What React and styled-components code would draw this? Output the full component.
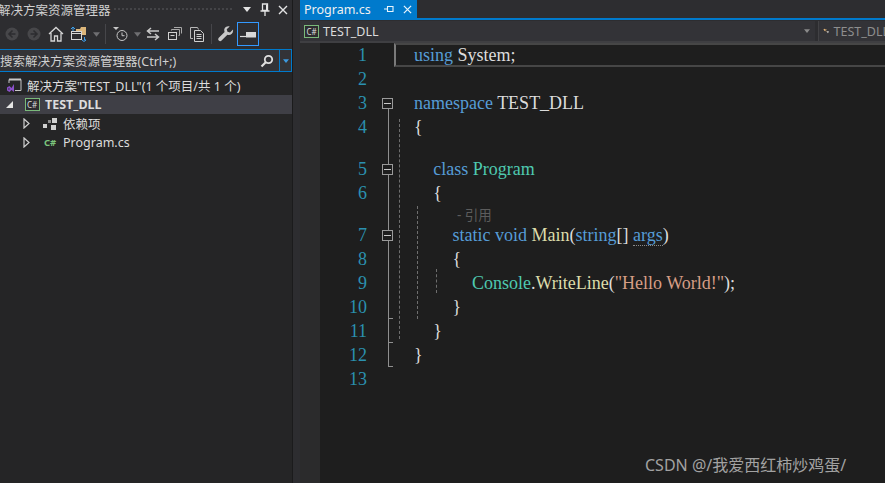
import React from "react";
import styled, { createGlobalStyle } from "styled-components";

const GlobalStyle = createGlobalStyle`
  html, body {
    margin: 0;
    padding: 0;
    width: 885px;
    height: 483px;
    overflow: hidden;
    background: #2d2d30;
  }
`;

const uiFont = `"Noto Sans", "Noto Sans CJK SC", sans-serif`;

const Window = styled.div`
  position: relative;
  width: 885px;
  height: 483px;
  display: flex;
  overflow: hidden;
  background: #2d2d30;
  font-family: ${uiFont};
`;

/* ---- solution explorer ---- */
const Explorer = styled.div`
  width: 292px;
  height: 100%;
  flex: none;
  display: flex;
  flex-direction: column;
  background: #252526;
  border-right: 1px solid #1b1b1c;
`;

const TitleBar = styled.div`
  height: 19px;
  display: flex;
  align-items: center;
  background: #2d2d30;
  color: #d0d0d0;
  font-size: 12.5px;
  white-space: nowrap;
`;

const TitleText = styled.span`
  margin-left: -2px;
  width: 111px;
  flex: none;
`;

const Grip = styled.div`
  flex: none;
  width: 119px;
  margin-left: 4px;
  height: 5px;
  background-image: radial-gradient(#46464a 0.7px, transparent 0.8px);
  background-size: 4px 4px;
`;

const TitleButtons = styled.div`
  display: flex;
  align-items: center;
  margin-left: 7px;
  gap: 3px;
`;

const TitleButton = styled.div`
  width: 15px;
  height: 15px;
  display: flex;
  align-items: center;
  justify-content: center;
`;

const Toolbar = styled.div`
  height: 30px;
  display: flex;
  align-items: center;
  background: #2d2d30;
  padding-left: 1px;
`;

const ToolButton = styled.div`
  width: ${(p) => p.$w || 22}px;
  height: 24px;
  flex: none;
  display: flex;
  align-items: center;
  justify-content: center;
  box-sizing: border-box;
  border: ${(p) => (p.$active ? "1px solid #3399ff" : "none")};
`;

const ToolSep = styled.div`
  width: 1px;
  height: 20px;
  flex: none;
  margin: 0 ${(p) => p.$gap || 5}px;
  background: #46464a;
`;

const SearchBox = styled.div`
  height: 23px;
  display: flex;
  align-items: center;
  box-sizing: border-box;
  border: 1px solid #007acc;
  border-left: none;
  background: #333337;
  color: #d0d0d0;
  font-size: 12.5px;
  white-space: nowrap;
`;

const SearchText = styled.span`
  flex: 1;
`;

const SearchIcon = styled.div`
  width: 24px;
  display: flex;
  justify-content: center;
`;

const SearchDrop = styled.div`
  width: 11px;
  height: 100%;
  display: flex;
  align-items: center;
  justify-content: center;
  border-left: 1px solid #007acc;
`;

const Tree = styled.div`
  margin-top: 3px;
  display: flex;
  flex-direction: column;
`;

const TreeRow = styled.div`
  height: ${(p) => p.$h || 19}px;
  display: flex;
  align-items: center;
  padding-left: ${(p) => p.$pad || 0}px;
  background: ${(p) => (p.$selected ? "#3f3f46" : "transparent")};
  color: #dcdcdc;
  font-size: 12.5px;
  font-weight: ${(p) => (p.$selected ? 700 : 400)};
  white-space: nowrap;
`;

const TreeIcon = styled.div`
  width: ${(p) => p.$w || 16}px;
  flex: none;
  display: flex;
  align-items: center;
  justify-content: center;
  margin-right: ${(p) => p.$mr || 0}px;
`;

const ProjectBadge = styled.div`
  width: 13px;
  height: 11px;
  border: 1px solid #7ab97a;
  color: #dcdcdc;
  background: #2d2d30;
  font-size: 8px;
  font-weight: 400;
  line-height: 11px;
  text-align: center;
`;

const CsBadge = styled.span`
  color: #7cc47c;
  font-size: 9.5px;
  font-weight: 700;
`;

/* ---- editor ---- */
const Editor = styled.div`
  margin-left: 7px;
  flex: 1;
  min-width: 0;
  display: flex;
  flex-direction: column;
`;

const TabStrip = styled.div`
  height: 18px;
  flex: none;
  display: flex;
  border-bottom: 2px solid #007acc;
`;

const Tab = styled.div`
  width: 117px;
  display: flex;
  align-items: center;
  background: #007acc;
  color: #f0f0f0;
  font-size: 12.5px;
  padding-left: 4px;
  box-sizing: border-box;
`;

const TabName = styled.span`
  width: 76px;
  flex: none;
`;

const TabIcon = styled.div`
  width: 18px;
  flex: none;
  display: flex;
  justify-content: center;
`;

const NavBar = styled.div`
  height: 20px;
  flex: none;
  display: flex;
  background: #333337;
  border-bottom: 2px solid #3f3f42;
  border-top: 1px solid #2d2d30;
  box-sizing: content-box;
  margin-top: 0;
`;

const NavCombo = styled.div`
  width: ${(p) => p.$w}px;
  flex: none;
  display: flex;
  align-items: center;
  padding-left: 4px;
  box-sizing: border-box;
  border-right: ${(p) => (p.$split ? "1px solid #424245" : "none")};
  color: ${(p) => p.$color || "#dcdcdc"};
  font-size: 12.5px;
  white-space: nowrap;
`;

const NavGap = styled.div`
  width: 3px;
  flex: none;
  background: #2d2d30;
  border-right: 1px solid #424245;
`;

const NavName = styled.span`
  margin-left: 4px;
  flex: 1;
`;

const NavArrow = styled.div`
  width: 16px;
  flex: none;
  display: flex;
  justify-content: center;
`;

const CodeBody = styled.div`
  position: relative;
  flex: 1;
  display: flex;
  background: #1e1e1e;
  min-height: 0;
`;

const Margin = styled.div`
  width: 20px;
  flex: none;
  background: #2b2b2c;
`;

const Lines = styled.div`
  flex: 1;
  min-width: 0;
  display: flex;
  flex-direction: column;
`;

const Line = styled.div`
  height: 24px;
  display: flex;
  font-family: "Liberation Serif", "Noto Sans CJK SC", serif;
  font-size: 18px;
  line-height: 24px;
  white-space: pre;
  color: #dcdcdc;
`;

const LineNo = styled.div`
  width: 47px;
  flex: none;
  text-align: right;
  color: #2b91af;
`;

const Code = styled.div`
  margin-left: 47px;
  padding-left: ${(p) => p.$level * 19.3}px;
`;

const LensRow = styled.div`
  height: 18px;
  padding-left: 137px;
  display: flex;
  align-items: center;
  color: #5c5c5c;
  font-size: 13.5px;
  white-space: pre;
`;

const Kw = styled.span`
  color: ${(p) =>
    ({ k: "#569cd6", t: "#4ec9b0", m: "#dcdcaa", s: "#d69d85" })[p.$kind] || "#dcdcdc"};
  border-bottom: ${(p) => (p.$dotted ? "1px dotted #8a8a8a" : "none")};
`;

const CurrentLine = styled.div`
  position: absolute;
  left: 94px;
  right: 0;
  top: 0;
  height: 24px;
  box-sizing: border-box;
  border: 2px solid #464646;
  border-left: 2px solid #7a7a7a;
  border-right: none;
`;

const FoldLine = styled.div`
  position: absolute;
  left: 88px;
  top: ${(p) => p.$top}px;
  height: ${(p) => p.$h}px;
  width: 1px;
  background: #8f8f8f;
`;

const FoldTick = styled.div`
  position: absolute;
  left: 88px;
  top: ${(p) => p.$top}px;
  width: 5px;
  height: 1px;
  background: #8f8f8f;
`;

const FoldBox = styled.div`
  position: absolute;
  left: 82px;
  top: ${(p) => p.$top}px;
  width: 11px;
  height: 11px;
  box-sizing: border-box;
  border: 1px solid #9a9a9a;
  background: #1e1e1e;
  &::after {
    content: "";
    position: absolute;
    left: 1px;
    right: 1px;
    top: 4px;
    height: 1px;
    background: #c8c8c8;
  }
`;

const IndentGuide = styled.div`
  position: absolute;
  left: ${(p) => p.$left}px;
  top: ${(p) => p.$top}px;
  height: ${(p) => p.$h}px;
  width: 0;
  border-left: 1px dashed #6e6e6e;
`;

const Watermark = styled.div`
  position: absolute;
  left: 645px;
  top: 454px;
  color: #a2a2a2;
  font-size: 16px;
  line-height: 22px;
  white-space: nowrap;
  font-family: "Noto Sans", "Noto Sans CJK SC", sans-serif;
`;

const Triangle = ({ color = "#d0d0d0", size = 7 }) => (
  <svg width={size} height={Math.ceil(size / 2) + 1} viewBox="0 0 8 5">
    <path d="M0 0h8L4 5z" fill={color} />
  </svg>
);

const Expander = () => (
  <svg width="7" height="11" viewBox="0 0 7 11">
    <path d="M1 1l5 4.5L1 10z" fill="none" stroke="#d0d0d0" strokeWidth="1.2" />
  </svg>
);

const CircleArrow = ({ flip }) => (
  <svg width="14" height="14" viewBox="0 0 14 14" style={flip ? { transform: "scaleX(-1)" } : undefined}>
    <circle cx="7" cy="7" r="6.5" fill="#47474a" />
    <path d="M7.5 3.5L4 7l3.5 3.5M4 7h6.5" stroke="#2d2d30" strokeWidth="1.6" fill="none" />
  </svg>
);

const HomeIcon = () => (
  <svg width="16" height="16" viewBox="0 0 16 16">
    <path d="M1 8l7-6.5L15 8M3 7v8h3.5v-5h3v5H13V7" fill="none" stroke="#d6d6d6" strokeWidth="1.3" />
  </svg>
);

const SyncViewIcon = () => (
  <svg width="18" height="16" viewBox="0 0 18 16">
    <path d="M6 3h4l1-2h5v8h-4V5H6z" fill="#dcb67a" />
    <rect x="1.5" y="5.5" width="10" height="8" fill="#2d2d30" stroke="#d6d6d6" />
    <path d="M1.5 7.5h10" stroke="#d6d6d6" />
    <path d="M1 3l2-2 2 2M3 1v4" stroke="#3f9fe8" fill="none" />
    <path d="M12 14l2 1.5 2-1.5h-1.5v-3" stroke="#3f9fe8" fill="none" />
  </svg>
);

const HistoryIcon = () => (
  <svg width="16" height="16" viewBox="0 0 16 16">
    <path d="M0 1h6L3 4z" fill="#c8c8c8" />
    <circle cx="9" cy="9.5" r="5" fill="none" stroke="#c8c8c8" />
    <path d="M9 6.5v3.2h2.5" fill="none" stroke="#c8c8c8" />
  </svg>
);

const SwapIcon = () => (
  <svg width="14" height="14" viewBox="0 0 14 14">
    <path d="M5 1L1.5 4 5 7M2 4h11M9 7l3.5 3L9 13M12 10H1" fill="none" stroke="#c8c8c8" strokeWidth="1.5" />
  </svg>
);

const CollapseIcon = () => (
  <svg width="14" height="14" viewBox="0 0 14 14">
    <rect x="0.5" y="5.5" width="8" height="7" fill="none" stroke="#d0d0d0" />
    <path d="M2.5 8.5h4" stroke="#d0d0d0" />
    <path d="M3.5 3.5V2.5h8v6h-1M6 0.5h7.5v6" fill="none" stroke="#a8a8a8" />
  </svg>
);

const CopyIcon = () => (
  <svg width="16" height="16" viewBox="0 0 16 16">
    <path d="M4 12.5H1.5V1.5h7l1 2" fill="none" stroke="#b8b8b8" />
    <path d="M5.5 4.5h6l3 3v8h-9z" fill="none" stroke="#d0d0d0" />
    <path d="M7.5 8.5h5M7.5 10.5h5M7.5 12.5h5" stroke="#d0d0d0" />
  </svg>
);

const WrenchIcon = () => (
  <svg width="16" height="16" viewBox="0 0 16 16">
    <path d="M15 3.5l-3 3-2.5-.8-.8-2.5 3-2.700C9.500-.2 6.800 1 6.300 3.300c-.2 1 0 1.900.3 2.700L.8 11.800c-.8.8-.8 2 0 2.800s2 .8 2.800 0l5.800-5.800c2.900 1.100 6.300-1.200 5.600-5.300z" fill="#c8c8c8" />
  </svg>
);

const PinnedIcon = () => (
  <svg width="16" height="8" viewBox="0 0 16 8">
    <path d="M0 6.500h6" stroke="#d8d8d8" strokeWidth="1.200" />
    <rect x="6" y="2" width="10" height="5.500" fill="#d8d8d8" />
  </svg>
);

const PinIcon = () => (
  <svg width="10" height="13" viewBox="0 0 10 13">
    <path d="M2.500 1h5v6.500h-5zM0.500 8h9M5 8v5" fill="none" stroke="#e4e4e4" strokeWidth="1.300" />
    <path d="M6 1.500h1.500v6H6z" fill="#e4e4e4" />
  </svg>
);

const CloseIcon = ({ color = "#e4e4e4", size = 10 }) => (
  <svg width={size} height={size} viewBox="0 0 10 10">
    <path d="M1 1l8 8M9 1l-8 8" stroke={color} strokeWidth="1.400" />
  </svg>
);

const TabPinIcon = () => (
  <svg width="10" height="8" viewBox="0 0 10 8">
    <path d="M0 4h3M3.500 1v6M3.500 1.500h5.500v5H3.500" fill="none" stroke="#e8f4fc" strokeWidth="1.100" />
  </svg>
);

const MagnifierIcon = () => (
  <svg width="14" height="14" viewBox="0 0 14 14">
    <circle cx="8.500" cy="5.500" r="3.700" fill="none" stroke="#e0e0e0" strokeWidth="1.800" />
    <path d="M6 8l-4.500 4.500" stroke="#e0e0e0" strokeWidth="2.200" />
  </svg>
);

const SolutionIcon = () => (
  <svg width="16" height="16" viewBox="0 0 16 16">
    <path d="M3 6V2.500h12v11H9" fill="none" stroke="#c8c8c8" />
    <path d="M3 2.500h12" stroke="#c8c8c8" strokeWidth="2" />
    <path d="M8 7v8L5.500 13 3.500 15 1 13.500v-3L3.500 9l2 2z" fill="#8a50c8" />
    <path d="M2.500 11l1.500 1-1.500 1z" fill="#252526" />
  </svg>
);

const DependencyIcon = () => (
  <svg width="14" height="12" viewBox="0 0 14 12">
    <rect x="0" y="6" width="4" height="4" fill="#d0d0d0" />
    <rect x="5" y="2" width="3" height="3" fill="#8e8e8e" />
    <rect x="9" y="0" width="5" height="5" fill="#d0d0d0" />
    <rect x="8" y="7" width="5" height="5" fill="#d0d0d0" />
  </svg>
);

const MemberIcon = () => (
  <svg width="18" height="14" viewBox="0 0 18 14">
    <path d="M1 2l3-1 2 2 3-1 1 2-4 1 1 3-3-1-1-3z" fill="#e8b878" />
    <path d="M7 5l3 3 1 2" stroke="#e8b878" strokeWidth="1.500" fill="none" />
    <path d="M11 8h5v2l-2.500 3L11 10z" fill="#c8c8c8" />
  </svg>
);

const ToolDrop = () => (
  <ToolButton $w={10}>
    <Triangle color="#6f6f72" size={7} />
  </ToolButton>
);

const App = () => {
  return (
    <Window>
      <GlobalStyle />
      <Explorer>
        <TitleBar>
          <TitleText>解决方案资源管理器</TitleText>
          <Grip />
          <TitleButtons>
            <TitleButton>
              <Triangle color="#e4e4e4" size={8} />
            </TitleButton>
            <TitleButton>
              <PinIcon />
            </TitleButton>
            <TitleButton>
              <CloseIcon />
            </TitleButton>
          </TitleButtons>
        </TitleBar>
        <Toolbar>
          <ToolButton>
            <CircleArrow />
          </ToolButton>
          <ToolButton>
            <CircleArrow flip />
          </ToolButton>
          <ToolButton>
            <HomeIcon />
          </ToolButton>
          <ToolButton $w={24}>
            <SyncViewIcon />
          </ToolButton>
          <ToolDrop />
          <ToolSep $gap={4} />
          <ToolButton $w={22}>
            <HistoryIcon />
          </ToolButton>
          <ToolDrop />
          <ToolButton>
            <SwapIcon />
          </ToolButton>
          <ToolButton>
            <CollapseIcon />
          </ToolButton>
          <ToolButton>
            <CopyIcon />
          </ToolButton>
          <ToolSep $gap={3} />
          <ToolButton $w={22}>
            <WrenchIcon />
          </ToolButton>
          <ToolButton $w={22} $active>
            <PinnedIcon />
          </ToolButton>
        </Toolbar>
        <SearchBox>
          <SearchText>搜索解决方案资源管理器(Ctrl+;)</SearchText>
          <SearchIcon>
            <MagnifierIcon />
          </SearchIcon>
          <SearchDrop>
            <Triangle color="#3c9ae0" size={6} />
          </SearchDrop>
        </SearchBox>
        <Tree>
          <TreeRow $h={20} $pad={6}>
            <TreeIcon $mr={5}>
              <SolutionIcon />
            </TreeIcon>
            解决方案"TEST_DLL"(1 个项目/共 1 个)
          </TreeRow>
          <TreeRow $selected $pad={4}>
            <TreeIcon $w={10} $mr={10}>
              <svg width="7" height="7" viewBox="0 0 7 7">
                <path d="M7 0v7H0z" fill="#e4e4e4" />
              </svg>
            </TreeIcon>
            <TreeIcon $mr={5}>
              <ProjectBadge>C#</ProjectBadge>
            </TreeIcon>
            TEST_DLL
          </TreeRow>
          <TreeRow $pad={21}>
            <TreeIcon $w={10} $mr={11}>
              <Expander />
            </TreeIcon>
            <TreeIcon $mr={5}>
              <DependencyIcon />
            </TreeIcon>
            依赖项
          </TreeRow>
          <TreeRow $pad={21}>
            <TreeIcon $w={10} $mr={11}>
              <Expander />
            </TreeIcon>
            <TreeIcon $mr={5}>
              <CsBadge>C#</CsBadge>
            </TreeIcon>
            Program.cs
          </TreeRow>
        </Tree>
      </Explorer>

      <Editor>
        <TabStrip>
          <Tab>
            <TabName>Program.cs</TabName>
            <TabIcon>
              <TabPinIcon />
            </TabIcon>
            <TabIcon>
              <CloseIcon color="#e8f4fc" size={9} />
            </TabIcon>
          </Tab>
        </TabStrip>
        <NavBar>
          <NavCombo $w={515}>
            <ProjectBadge>C#</ProjectBadge>
            <NavName>TEST_DLL</NavName>
            <NavArrow>
              <Triangle color="#8a8a8a" size={6} />
            </NavArrow>
          </NavCombo>
          <NavGap />
          <NavCombo $w={70} $color="#8e8e8e">
            <MemberIcon />
            <NavName>TEST_DLL</NavName>
          </NavCombo>
        </NavBar>
        <CodeBody>
          <Margin />
          <Lines>
            <Line>
              <LineNo>1</LineNo>
              <Code $level={0}>
                <Kw $kind="k">using</Kw> System;
              </Code>
            </Line>
            <Line>
              <LineNo>2</LineNo>
            </Line>
            <Line>
              <LineNo>3</LineNo>
              <Code $level={0}>
                <Kw $kind="k">namespace</Kw> TEST_DLL
              </Code>
            </Line>
            <Line>
              <LineNo>4</LineNo>
              <Code $level={0}>{"{"}</Code>
            </Line>
            <LensRow />
            <Line>
              <LineNo>5</LineNo>
              <Code $level={1}>
                <Kw $kind="k">class</Kw> <Kw $kind="t">Program</Kw>
              </Code>
            </Line>
            <Line>
              <LineNo>6</LineNo>
              <Code $level={1}>{"{"}</Code>
            </Line>
            <LensRow>- 引用</LensRow>
            <Line>
              <LineNo>7</LineNo>
              <Code $level={2}>
                <Kw $kind="k">static void</Kw> <Kw $kind="m">Main</Kw>(<Kw $kind="k">string</Kw>[]{" "}
                <Kw $kind="k" $dotted>args</Kw>)
              </Code>
            </Line>
            <Line>
              <LineNo>8</LineNo>
              <Code $level={2}>{"{"}</Code>
            </Line>
            <Line>
              <LineNo>9</LineNo>
              <Code $level={3}>
                <Kw $kind="t">Console</Kw>.<Kw $kind="m">WriteLine</Kw>(<Kw $kind="s">"Hello World!"</Kw>);
              </Code>
            </Line>
            <Line>
              <LineNo>10</LineNo>
              <Code $level={2}>{"}"}</Code>
            </Line>
            <Line>
              <LineNo>11</LineNo>
              <Code $level={1}>{"}"}</Code>
            </Line>
            <Line>
              <LineNo>12</LineNo>
              <Code $level={0}>{"}"}</Code>
            </Line>
            <Line>
              <LineNo>13</LineNo>
            </Line>
          </Lines>
          <CurrentLine />
          <FoldLine $top={66} $h={257} />
          <FoldTick $top={275} />
          <FoldTick $top={299} />
          <FoldTick $top={323} />
          <FoldBox $top={55} />
          <FoldBox $top={121} />
          <FoldBox $top={187} />
          <IndentGuide $left={99} $top={76} $h={220} />
          <IndentGuide $left={117} $top={163} $h={113} />
          <IndentGuide $left={136} $top={226} $h={24} />
        </CodeBody>
      </Editor>
      <Watermark>CSDN @/我爱西红柿炒鸡蛋/</Watermark>
    </Window>
  );
};

export default App;
